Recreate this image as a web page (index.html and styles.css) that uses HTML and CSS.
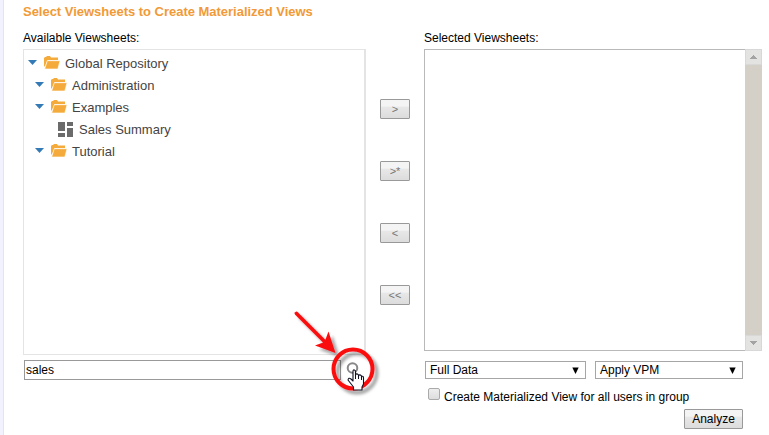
FILE: index.html
```html
<!DOCTYPE html>
<html lang="en">
<head>
<meta charset="utf-8">
<title>Materialized Views</title>
<link rel="stylesheet" href="styles.css">
</head>
<body>
<svg class="defs" width="0" height="0">
  <symbol id="folder" viewBox="0 0 16 13">
    <path fill="#f5ab3c" d="M0 2L1 1H2L3 0H6L7 1.500H14V4H3.500L1.500 9L0 11Z"/>
    <path fill="#f5ab3c" stroke="#fff" stroke-width=".6" d="M3.300 4.700H16L13.800 13H.7Z"/>
  </symbol>
  <symbol id="caret" viewBox="0 0 9 5"><path fill="#337ab7" d="M0 0H9L4.500 5Z"/></symbol>
</svg>
<main class="page">
  <h1 class="title">Select Viewsheets to Create Materialized Views</h1>
  <div class="columns">
    <section class="available">
      <div class="label">Available Viewsheets:</div>
      <div class="tree">
        <div class="node root"><svg class="caret"><use href="#caret"/></svg><svg class="folder"><use href="#folder"/></svg><span>Global Repository</span></div>
        <div class="node"><svg class="caret"><use href="#caret"/></svg><svg class="folder"><use href="#folder"/></svg><span>Administration</span></div>
        <div class="node"><svg class="caret"><use href="#caret"/></svg><svg class="folder"><use href="#folder"/></svg><span>Examples</span></div>
        <div class="node leaf"><svg class="sheet" viewBox="0 0 15 15"><path fill="#6b6b6b" d="M0 0H7V9H0ZM9 0H15V4H9ZM9 6H15V15H9ZM0 11H7V15H0Z"/></svg><span>Sales Summary</span></div>
        <div class="node"><svg class="caret"><use href="#caret"/></svg><svg class="folder"><use href="#folder"/></svg><span>Tutorial</span></div>
      </div>
      <input class="search" type="text" value="sales" aria-label="Search">
    </section>
    <div class="moves">
      <button class="btn move">&gt;</button>
      <button class="btn move">&gt;*</button>
      <button class="btn move">&lt;</button>
      <button class="btn move">&lt;&lt;</button>
    </div>
    <section class="selected">
      <div class="label">Selected Viewsheets:</div>
      <div class="listbox">
        <div class="list"></div>
        <div class="scrollbar">
          <span class="arrow"><svg width="7" height="4"><path fill="#a3a3a3" d="M3 0H4V1H5V2H6V3H7V4H0V3H1V2H2V1H3Z"/></svg></span>
          <span class="arrow"><svg width="7" height="4"><path fill="#a3a3a3" d="M0 0H7V1H6V2H5V3H4V4H3V3H2V2H1V1H0Z"/></svg></span>
        </div>
      </div>
      <div class="selects">
        <div class="select data"><span>Full Data</span><svg width="7" height="7"><path d="M.3 .5H6.700L3.500 7Z"/></svg></div>
        <div class="select vpm"><span>Apply VPM</span><svg width="7" height="7"><path d="M.3 .5H6.700L3.500 7Z"/></svg></div>
      </div>
      <label class="group"><span class="check"></span><span class="group-text">Create Materialized View for all users in group</span></label>
      <button class="btn analyze">Analyze</button>
    </section>
  </div>
  <svg class="pointer" width="110" height="100" viewBox="280 300 110 100">
    <defs><filter id="shadow" x="-30%" y="-30%" width="170%" height="170%"><feDropShadow dx="4" dy="4" stdDeviation="1.500" flood-color="#000" flood-opacity=".35"/></filter></defs>
    <circle cx="352.500" cy="368" r="4.800" fill="#fff" stroke="#888" stroke-width="2"/>
    <g filter="url(#shadow)">
      <path d="M296.500 313.500L326 343" stroke="#fa0a10" stroke-width="3.800" stroke-linecap="round"/>
      <path fill="#fa0a10" d="M335.500 353L315 345.500L324.500 342L328.500 331.500Z"/>
      <circle cx="353" cy="369" r="19.500" fill="none" stroke="#fa0a10" stroke-width="4"/>
    </g>
    <path fill="#fff" stroke="#101020" stroke-width="1.100" stroke-linejoin="round" d="M353 380V371.500Q353 369.500 354.500 370Q355.500 370.300 355.500 372V376V374.500Q357 373 358.500 375V377V375.500Q360 374 361.500 376V378V376.500Q363.500 375.500 363.500 378V384L362 387V390H353.500V387L348 380Q348.500 377 351 379L353 381Z"/>
    <path stroke="#101020" d="M355.500 374V379M358.500 376V379M361.500 377V380"/>
  </svg>
</main>
</body>
</html>
```

FILE: styles.css
```css
* { box-sizing: border-box; }
body { margin: 0; background: #fff; font: 12px/14px "Liberation Sans", Arial, sans-serif; color: #000; }
.defs { position: absolute; }
.page { position: relative; height: 435px; overflow: hidden; border-left: 3px solid #f2f2fe; padding: 4px 0 0 20px; box-shadow: inset 1px 0 #e5e5e5; }
.title { margin: 0 0 12px; font-size: 13px; line-height: 15px; letter-spacing: -.02px; color: #f19a37; }
.columns { display: flex; }
.available { width: 343px; }
.label { height: 14px; margin-bottom: 4px; }
.tree { height: 306px; border: 1px solid #e4e4e4; border-right-width: 2px; padding: 2px 0 0 11px; font-size: 13px; color: #444; }
.node { display: flex; align-items: center; height: 22px; }
.node span { padding-top: 2px; }
.root { margin-left: -7px; }
.leaf { padding-left: 23px; }
.caret { width: 9px; height: 5px; margin: 0 7px 1px 0; }
.folder { width: 16px; height: 13px; margin: 0 5px 1px 0; }
.sheet { width: 15px; height: 15px; margin-right: 6px; }
.search { display: block; width: 317px; height: 20px; margin: 5px 0 0 1px; border: 1px solid #999; padding: 0 1px; font: inherit; }
.moves { display: flex; flex-direction: column; gap: 42px; width: 30px; margin: 68px 14px 0; }
.btn { border: 1px solid #999; border-radius: 1px; background: linear-gradient(#f4f4f4 0 35%, #e8e8e8 38%, #dcdcdc); font: inherit; padding: 0; }
.move { height: 20px; font-size: 11px; line-height: 18px; color: #777; }
.selected { width: 338px; }
.listbox { display: flex; height: 302px; }
.list { flex: 1; border: 1px solid #b9b9b9; border-right: 0; }
.scrollbar { display: flex; flex-direction: column; justify-content: space-between; width: 17px; background: #d4d0c8; }
.arrow { display: flex; align-items: center; justify-content: center; height: 16px; border: 1px solid #d8d8d8; background: #e3e3e1; }
.selects { display: flex; gap: 9px; margin: 10px 0 0 1px; }
.select { display: flex; align-items: center; justify-content: space-between; height: 18px; border: 1px solid #a6a6a6; padding: 0 6px 0 4px; }
.data { width: 161px; }
.vpm { width: 148px; }
.group { display: flex; align-items: flex-start; height: 21px; margin: 9px 0 0 4px; }
.check { width: 12px; height: 12px; border: 1px solid #aaa; border-radius: 2px; background: linear-gradient(#eee, #ddd); }
.group-text { margin: 2px 0 0 4px; white-space: nowrap; }
.analyze { display: block; width: 59px; height: 20px; margin-left: 260px; line-height: 18px; }
.pointer { position: absolute; left: 277px; top: 300px; }
```
